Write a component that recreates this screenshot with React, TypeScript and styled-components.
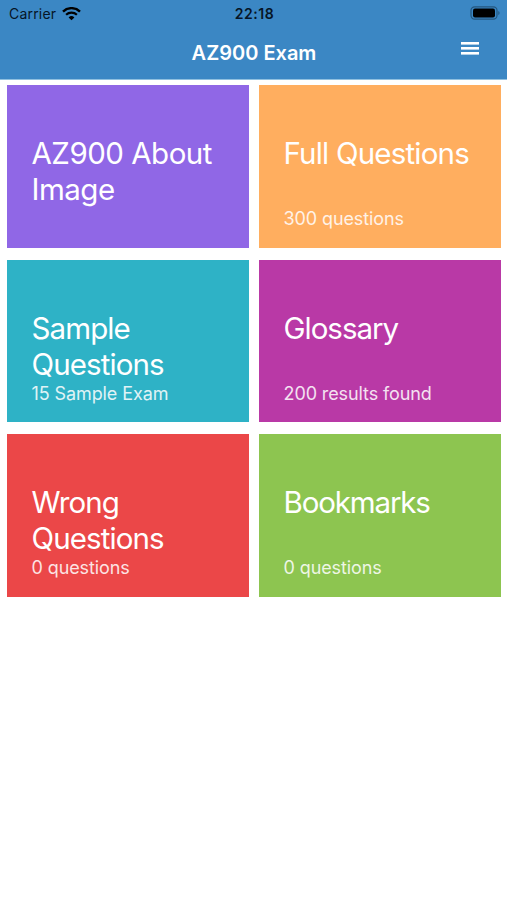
import React, { FC } from 'react';
import styled, { createGlobalStyle } from 'styled-components';

interface ICard {
  id: string;
  title: string;
  info?: string;
  color: string;
  titleSpacing: string;
}

const cards: ICard[] = [
  { id: 'about', title: 'AZ900 About Image', color: '#9067e6', titleSpacing: '-0.5px' },
  { id: 'full', title: 'Full Questions', info: '300 questions', color: '#ffae5f', titleSpacing: '-0.8px' },
  { id: 'sample', title: 'Sample Questions', info: '15 Sample Exam', color: '#2eb2c6', titleSpacing: '-0.9px' },
  { id: 'glossary', title: 'Glossary', info: '200 results found', color: '#b939a6', titleSpacing: '-1px' },
  { id: 'wrong', title: 'Wrong Questions', info: '0 questions', color: '#eb4748', titleSpacing: '-0.9px' },
  { id: 'bookmarks', title: 'Bookmarks', info: '0 questions', color: '#8dc550', titleSpacing: '-1.15px' },
];

const GlobalStyle = createGlobalStyle`
  body {
    margin: 0;
    background: #ffffff;
    font-family: Inter, 'Liberation Sans', sans-serif;
  }
`;

const Screen = styled.div`
  display: flex;
  flex-direction: column;
  min-height: 900px;
  background: #ffffff;
`;

const Header = styled.header`
  height: 79.5px;
  background: #3b87c4;
  border-bottom: 1px solid #8fc0e0;
  box-sizing: border-box;
`;

const StatusBar = styled.div`
  display: grid;
  grid-template-columns: 1fr auto 1fr;
  align-items: center;
  height: 27px;
  padding: 0 7px 0 9px;
  color: #061526;
`;

const Carrier = styled.span`
  display: flex;
  align-items: center;
  gap: 6px;
  font-size: 14px;
  line-height: 27px;
  letter-spacing: 0.2px;
`;

const Clock = styled.span`
  font-size: 14px;
  font-weight: 600;
  line-height: 27px;
  letter-spacing: 0.5px;
`;

const Battery = styled.svg`
  justify-self: end;
  margin-top: -1px;
`;

const NavBar = styled.div`
  display: grid;
  grid-template-columns: 1fr auto 1fr;
  align-items: start;
  padding: 0 28px 0 29px;
`;

const Heading = styled.h1`
  grid-column: 2;
  margin: 0;
  padding-top: 12px;
  color: #ffffff;
  font-size: 20px;
  font-weight: 600;
  line-height: 28px;
`;

const MenuButton = styled.button`
  justify-self: end;
  display: flex;
  margin: 15px 0 0;
  padding: 0;
  border: none;
  background: none;
`;

const Grid = styled.main`
  display: grid;
  grid-template-columns: 242px 242px;
  grid-auto-rows: 162.5px;
  gap: 12.1px 10px;
  padding: 5.5px 6px 0 7px;
`;

const Card = styled.section<{ $color: string }>`
  box-sizing: border-box;
  padding: 50px 16px 0 24.5px;
  background: ${({ $color }) => $color};
  color: #ffffff;
`;

const Title = styled.h2<{ $spacing: string }>`
  min-height: 72px;
  margin: 0;
  font-size: 29.5px;
  font-weight: 400;
  line-height: 36px;
  letter-spacing: ${({ $spacing }) => $spacing};
`;

const Info = styled.p`
  margin: 1.2px 0 0;
  font-size: 18px;
  font-weight: 400;
  line-height: 22px;
  letter-spacing: -0.1px;
  opacity: 0.85;
`;

const WifiIcon: FC = () => (
  <svg width="19" height="14" viewBox="0 0 19 14" fill="none" stroke="#000000">
    <path d="M1 4.6a12.2 12.2 0 0 1 17 0" strokeWidth="2.4" />
    <path d="M4.1 7.8a7.8 7.8 0 0 1 10.8 0" strokeWidth="2.2" />
    <path d="M9.5 13.3L6.6 10.4a4.1 4.1 0 0 1 5.8 0z" fill="#000000" stroke="none" />
  </svg>
);

const App: FC = () => {
  return (
    <Screen>
      <GlobalStyle />
      <Header>
        <StatusBar>
          <Carrier>
            Carrier
            <WifiIcon />
          </Carrier>
          <Clock>22:18</Clock>
          <Battery width="30" height="14" viewBox="0 0 30 14">
            <rect x="1" y="0.8" width="26" height="12.4" rx="3.6" fill="none" stroke="#24577f" strokeWidth="1.2" />
            <rect x="3" y="2.5" width="22" height="9" rx="2" fill="#000000" />
            <path d="M28.3 5v4c1.7-.7 1.7-3.3 0-4z" fill="#24577f" />
          </Battery>
        </StatusBar>
        <NavBar>
          <Heading>AZ900 Exam</Heading>
          <MenuButton aria-label="Menu">
            <svg width="18" height="13" viewBox="0 0 18 13" fill="#ffffff">
              <rect y="0" width="18" height="2.6" />
              <rect y="5" width="18" height="2.6" />
              <rect y="10" width="18" height="2.6" />
            </svg>
          </MenuButton>
        </NavBar>
      </Header>
      <Grid>
        {cards.map((item) => (
          <Card key={item.id} $color={item.color}>
            <Title $spacing={item.titleSpacing}>{item.title}</Title>
            {item.info && <Info>{item.info}</Info>}
          </Card>
        ))}
      </Grid>
    </Screen>
  );
};

export default App;
